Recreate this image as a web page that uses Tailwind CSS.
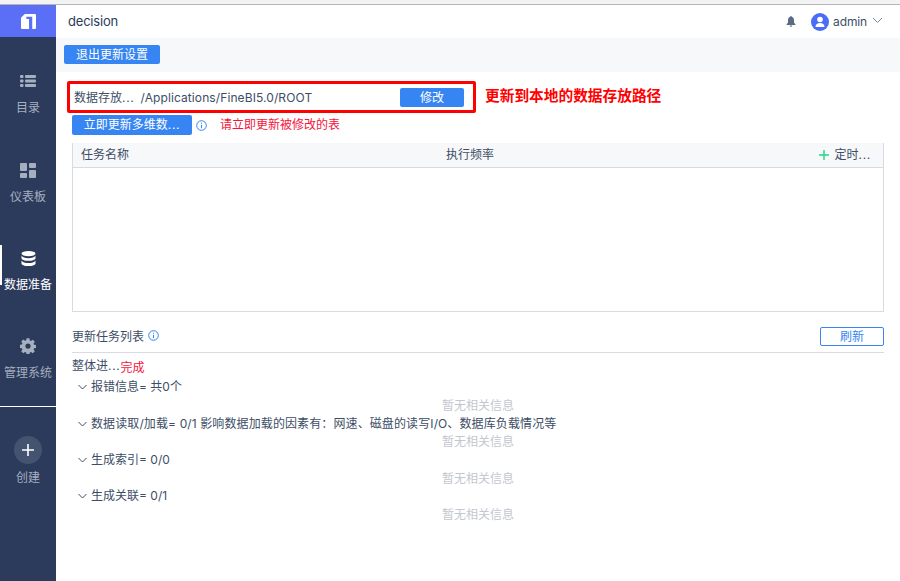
<!DOCTYPE html>
<html lang="zh-CN">
<head>
    <meta charset="UTF-8">
    <title>decision</title>
    <script src="https://cdn.jsdelivr.net/npm/@tailwindcss/browser@4"></script>
</head>
<body class="relative w-[900px] h-[581px] overflow-hidden bg-white text-[12px] leading-[16px] text-[#3d4d66] font-['Inter','Noto_Sans_CJK_SC',sans-serif]">
    <div class="h-[5px] bg-[#f3f3f3] border-b border-[#b5b5b5]"></div>
    <div class="flex h-[576px]">
        <!-- sidebar -->
        <aside class="w-[56px] shrink-0 bg-[#2c3b5b] text-[#a6afc0] flex flex-col items-center">
            <div class="w-full h-[32px] bg-[#5a6ff5] flex items-center justify-center">
                <svg class="ml-[1px]" width="15" height="15" viewBox="0 0 14 14" fill="#fff"><path d="M0 3.500 3.500 0H13a1 1 0 0 1 1 1V13a1 1 0 0 1-1 1H10.500V2.600H5V4.600H7.500V14H1a1 1 0 0 1-1-1z"/></svg>
            </div>
            <div class="w-full h-[88px] pt-[37px] flex flex-col items-center">
                <svg width="16" height="14" viewBox="0 0 16 14" fill="#a6afc0"><rect x="0" y="1" width="3.500" height="3" rx="1"/><rect x="5" y="1" width="11" height="3" rx="1"/><rect x="0" y="5.500" width="3.500" height="3" rx="1"/><rect x="5" y="5.500" width="11" height="3" rx="1"/><rect x="0" y="10" width="3.500" height="3" rx="1"/><rect x="5" y="10" width="11" height="3" rx="1"/></svg>
                <span class="mt-[12px]">目录</span>
            </div>
            <div class="w-full h-[88px] pt-[38px] flex flex-col items-center">
                <svg width="16" height="15" viewBox="0 0 16 15" fill="#a6afc0"><rect x="0" y="0" width="7" height="8" rx="1"/><rect x="9" y="0" width="7" height="5" rx="1"/><rect x="0" y="10" width="7" height="5" rx="1"/><rect x="9" y="7" width="7" height="8" rx="1"/></svg>
                <span class="mt-[11px]">仪表板</span>
            </div>
            <div class="relative w-full h-[88px] pt-[38px] flex flex-col items-center text-white">
                <div class="absolute left-0 top-[32px] w-[2px] h-[40px] bg-white"></div>
                <svg width="15" height="15" viewBox="0 0 15 15" fill="#fff"><ellipse cx="7.500" cy="2.600" rx="7" ry="2.600"/><path d="M.5 4.600c1 2 3.600 2.600 7 2.600s6-.6 7-2.600v2.600c0 1.500-3.100 2.600-7 2.600S.5 8.700.5 7.200z"/><path d="M.5 9.400c1 2 3.600 2.600 7 2.600s6-.6 7-2.600v3c0 1.500-3.100 2.600-7 2.600s-7-1.100-7-2.600z"/></svg>
                <span class="mt-[11px] whitespace-nowrap">数据准备</span>
            </div>
            <div class="w-full h-[88px] pt-[37px] flex flex-col items-center">
                <svg width="16" height="16" viewBox="0 0 16 16" fill="#a6afc0"><path fill-rule="evenodd" d="M6.600.3h2.800l.4 2.100 1.200.5 1.800-1.200 2 2-1.200 1.800.5 1.200 2.100.4v2.800l-2.100.4-.5 1.200 1.200 1.800-2 2-1.800-1.200-1.200.5-.4 2.100H6.600l-.4-2.100-1.200-.5-1.800 1.200-2-2 1.200-1.800-.5-1.200-2.100-.4V6.900l2.100-.4.5-1.200-1.200-1.800 2-2 1.800 1.200 1.200-.5zM8 5.500a2.600 2.600 0 1 0 0 5.200 2.600 2.600 0 0 0 0-5.200z"/></svg>
                <span class="mt-[11px] whitespace-nowrap">管理系统</span>
            </div>
            <div class="w-full h-[1px] mt-[17px] bg-white"></div>
            <div class="mt-[29px] w-[28px] h-[28px] rounded-full bg-[#44536f] flex items-center justify-center">
                <svg width="12" height="12" viewBox="0 0 12 12"><path d="M6 0v12M0 6h12" stroke="#fff" stroke-width="1.600"/></svg>
            </div>
            <span class="mt-[6px]">创建</span>
        </aside>

        <main class="flex-1 min-w-0 flex flex-col">
            <header class="h-[33px] shrink-0 bg-white flex items-center pl-[12px] pr-[17px]">
                <span class="text-[13px] tracking-[-0.2px] text-[#2c3b5b] -mt-[1px]">decision</span>
                <svg class="ml-auto" width="10" height="11" viewBox="0 0 10 11" fill="#5c6b85"><path d="M5 0c.5 0 .8.300.8.800C7.300 1.200 8 2.500 8 4v2.500L9.500 8.500v.5H.5v-.5L2 6.500V4c0-1.500.7-2.800 2.200-3.200C4.200.3 4.500 0 5 0z"/><path d="M3.700 9.500h2.600A1.300 1.300 0 0 1 3.700 9.500z"/></svg>
                <div class="ml-[15px] w-[18px] h-[18px] rounded-full bg-[#4a6cf7] flex items-center justify-center overflow-hidden">
                    <svg width="12" height="12" viewBox="0 0 12 12" fill="#fff"><circle cx="6" cy="3.500" r="2.800"/><path d="M1.500 11c0-2.600 1.800-4 4.500-4s4.500 1.400 4.500 4z"/></svg>
                </div>
                <span class="ml-[4px] w-[33px] tracking-[-0.1px] whitespace-nowrap text-[#3d4d66]">admin</span>
                <svg class="ml-[6px] -mt-[3px]" width="11" height="7" viewBox="0 0 11 7" fill="none" stroke="#7a879c"><path d="M1 1l4.500 4.500L10 1"/></svg>
            </header>
            <div class="h-[34px] shrink-0 bg-[#f7f8fa] pl-[8px] pt-[7px]">
                <button class="w-[96px] h-[19px] rounded-[2px] bg-[#3685f2] text-white">退出更新设置</button>
            </div>

            <section class="pl-[11px] pr-[16px] pt-[9px]">
                <div class="w-[409px] h-[32px] border-[3px] border-[#f00] rounded-[2px] flex items-center pl-[4px] pr-[9px]">
                    <span class="whitespace-nowrap mt-[1px]">数据存放<span class="tracking-[0.7px]">...</span></span>
                    <span class="ml-[6px] whitespace-nowrap mt-[1px] tracking-[0.1px]">/Applications/FineBI5.0/ROOT</span>
                    <button class="ml-auto w-[64px] h-[19px] rounded-[2px] bg-[#3685f2] text-white mt-[1px]">修改</button>
                </div>
                <div class="flex items-center pl-[5px] mt-[2px] h-[20px]">
                    <button class="w-[120px] h-[20px] rounded-[2px] bg-[#3685f2] text-white">立即更新多维数<span class="tracking-[0.7px]">...</span></button>
                    <svg class="ml-[4px]" width="11" height="11" viewBox="0 0 11 11" fill="none" stroke="#3685f2"><circle cx="5.500" cy="5.500" r="4.800"/><path d="M5.500 4.800v3.400M5.500 2.700v1"/></svg>
                    <span class="ml-[13px] text-[#f5143c]">请立即更新被修改的表</span>
                </div>
                <!-- task table -->
                <div class="ml-[5px] mt-[8px] w-[812px] h-[169px] border-x border-b border-[#d8dbe0]">
                    <div class="h-[25px] bg-[#f7f8fa] border-b border-[#d8dbe0] flex items-center pl-[8px] pr-[12px] text-[#3d4d66]">
                        <span class="w-[365px]">任务名称</span>
                        <span>执行频率</span>
                        <svg class="ml-auto" width="10" height="10" viewBox="0 0 10 10" stroke="#22d48a" stroke-width="1.400"><path d="M5 0v10M0 5h10"/></svg>
                        <span class="ml-[6px]">定时<span class="tracking-[0.7px]">...</span></span>
                    </div>
                </div>

                <div class="ml-[5px] w-[812px] mt-[15px] h-[26px] border-b border-[#d8dbe0] flex items-start">
                    <span class="mt-[2px]">更新任务列表</span>
                    <svg class="ml-[4px] mt-[3px]" width="11" height="11" viewBox="0 0 11 11" fill="none" stroke="#3685f2"><circle cx="5.500" cy="5.500" r="4.800"/><path d="M5.500 4.800v3.400M5.500 2.700v1"/></svg>
                    <button class="ml-auto w-[64px] h-[19px] rounded-[2px] border border-[#3685f2] text-[#3685f2]">刷新</button>
                </div>

                <div class="ml-[5px] mt-[5px] h-[16px] flex">
                    <span>整体进<span class="tracking-[0.7px]">...</span></span><span class="text-[#f5143c] mt-[2px]">完成</span>
                </div>
                <div class="ml-[5px] text-[#3d4d66]">
                    <div class="h-[37px] mt-[5px]">
                        <div class="flex items-center"><svg class="ml-[6px] mr-[4px]" width="9" height="6" viewBox="0 0 9 6" fill="none" stroke="#3d4d66"><path d="M.5 1l4 4 4-4"/></svg><span>报错信息= 共0个</span></div>
                        <div class="text-center text-[#c3c7cf] mt-[3px] w-[812px]">暂无相关信息</div>
                    </div>
                    <div class="h-[36px]">
                        <div class="flex items-center"><svg class="ml-[6px] mr-[4px]" width="9" height="6" viewBox="0 0 9 6" fill="none" stroke="#3d4d66"><path d="M.5 1l4 4 4-4"/></svg><span class="tracking-[0.11px]">数据读取/加载= 0/1 影响数据加载的因素有：网速、磁盘的读写I/O、数据库负载情况等</span></div>
                        <div class="text-center text-[#c3c7cf] mt-[2px] w-[812px]">暂无相关信息</div>
                    </div>
                    <div class="h-[36px]">
                        <div class="flex items-center"><svg class="ml-[6px] mr-[4px]" width="9" height="6" viewBox="0 0 9 6" fill="none" stroke="#3d4d66"><path d="M.5 1l4 4 4-4"/></svg><span>生成索引= 0/0</span></div>
                        <div class="text-center text-[#c3c7cf] mt-[3px] w-[812px]">暂无相关信息</div>
                    </div>
                    <div class="h-[36px]">
                        <div class="flex items-center"><svg class="ml-[6px] mr-[4px]" width="9" height="6" viewBox="0 0 9 6" fill="none" stroke="#3d4d66"><path d="M.5 1l4 4 4-4"/></svg><span>生成关联= 0/1</span></div>
                        <div class="text-center text-[#c3c7cf] mt-[3px] w-[812px]">暂无相关信息</div>
                    </div>
                </div>
            </section>
        </main>
    </div>
    <div class="absolute left-[485px] top-[87px] text-[14.7px] leading-[18px] font-bold text-[#f00]">更新到本地的数据存放路径</div>
</body>
</html>
